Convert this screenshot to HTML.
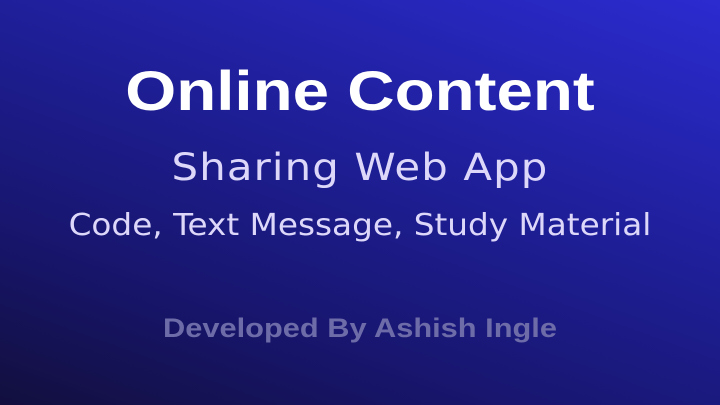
<!DOCTYPE html>
<html><head><style>
html,body{margin:0;padding:0}
body{width:720px;height:405px;overflow:hidden;background:linear-gradient(200deg,#2b2bd0 0%,#1f1f9a 40%,#17156a 75%,#120f3e 100%);font-family:"Liberation Sans",sans-serif;position:relative}
.t{position:absolute;left:0;width:720px;text-align:center;white-space:nowrap}
.h{top:58px;font-size:56px;font-weight:bold;color:#fff;transform:scaleX(1.17)}
.s{top:146px;font-size:37px;color:#ddd8fa;font-family:"DejaVu Sans",sans-serif;letter-spacing:1px;transform:scaleX(1.13)}
.c{top:208px;font-size:30px;color:#ddd8fa;font-family:"DejaVu Sans",sans-serif;transform:scaleX(1.09)}
.d{top:313px;font-size:27px;font-weight:bold;color:#6e6ca8;transform:scaleX(1.14)}
</style></head><body>
<div class="t h">Online Content</div>
<div class="t s">Sharing Web App</div>
<div class="t c">Code, Text Message, Study Material</div>
<div class="t d">Developed By Ashish Ingle</div>
</body></html>
